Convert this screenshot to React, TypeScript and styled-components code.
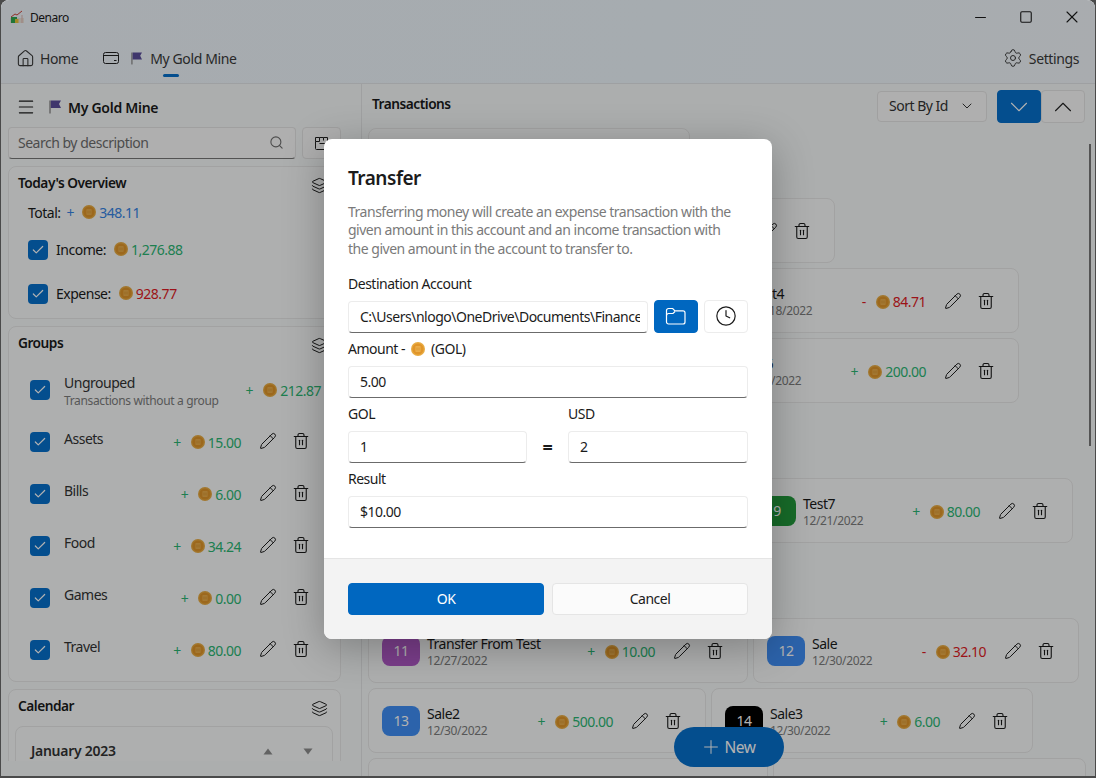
import React from 'react';
import styled, { createGlobalStyle } from 'styled-components';
import {
	Check,
	ChevronDown,
	ChevronUp,
	Clock,
	House,
	Layers,
	Menu,
	Minus,
	Pencil,
	Plus,
	Search,
	Settings,
	Square,
	Trash2,
	X,
} from 'lucide-react';

const GlobalStyle = createGlobalStyle`
	html, body {
		margin: 0;
		padding: 0;
		height: 100%;
		background: #4a4a4a;
		overflow: hidden;
	}
	* {
		box-sizing: border-box;
	}
	body {
		font-family: "Noto Sans", "Open Sans", sans-serif;
		font-size: 14px;
		letter-spacing: -0.035em;
		color: #1b1b1b;
	}
`;

const AppWindow = styled.div`
	position: relative;
	width: 1094px;
	height: 776px;
	margin-left: 1px;
	border-radius: 8px 8px 0 0;
	overflow: hidden;
	display: flex;
	flex-flow: column;
	background: #f7fafa;
`;

const TopArea = styled.div`
	flex: 0 0 84px;
	background: linear-gradient(100deg, #eff5fb, #eef6fc 60%, #f2f7fb);
	border-bottom: 1px solid #e2e6e9;
	display: flex;
	flex-flow: column;
`;

const TitleBar = styled.div`
	flex: 0 0 33px;
	display: flex;
	align-items: center;
	padding-left: 9px;
	gap: 6px;
	font-size: 12px;
	padding-top: 1px;
`;

const WindowButtons = styled.div`
	margin-left: auto;
	display: flex;
`;

const WindowButton = styled.div`
	width: 46px;
	height: 20px;
	display: flex;
	align-items: center;
	justify-content: center;
`;

const TabBar = styled.div`
	flex: 1;
	display: flex;
	align-items: center;
	padding: 0 16px 0 15px;
	color: #3a3a3a;
`;

const Tab = styled.div`
	position: relative;
	height: 100%;
	display: flex;
	align-items: center;
	gap: 8px;
	letter-spacing: -0.028em;
`;

const TabIndicator = styled.div`
	position: absolute;
	left: 60px;
	bottom: 6px;
	width: 16px;
	height: 3px;
	border-radius: 2px;
	background: #0670cc;
`;

const HomeTab = styled(Tab)`
	margin-right: 25px;
	gap: 5px;
`;

const SettingsTab = styled(Tab)`
	margin-left: auto;
	gap: 6px;
`;

const TabCardIcon = styled.span`
	display: flex;
	margin-right: 4px;
`;

const Body = styled.div`
	flex: 1;
	min-height: 0;
	display: flex;
`;

const LeftPane = styled.div`
	flex: 0 0 360px;
	height: 677px;
	overflow: hidden;
	padding: 5px 20px 0 7px;
	display: flex;
	flex-flow: column;
`;

const PaneHeader = styled.div`
	height: 36px;
	flex: none;
	display: flex;
	align-items: center;
	padding-left: 8px;
	gap: 13px;
	margin-bottom: 2px;
	font-weight: 600;
	letter-spacing: -0.02em;
`;

const PaneTitle = styled.div`
	display: flex;
	align-items: center;
	gap: 7px;
`;

const SearchRow = styled.div`
	flex: none;
	display: flex;
	gap: 6px;
	margin-bottom: 7px;
`;

const SearchBox = styled.div`
	flex: 1;
	height: 32px;
	display: flex;
	align-items: center;
	justify-content: space-between;
	padding: 0 11px 2px 9px;
	background: #fbfbfb;
	border: 1px solid #e5e5e5;
	border-bottom-color: #777;
	border-radius: 4px;
	color: #6e6e6e;
`;

const SquareButton = styled.div`
	flex: 0 0 39px;
	height: 32px;
	display: flex;
	align-items: center;
	padding-left: 11px;
	background: #fbfbfb;
	border: 1px solid #e5e5e5;
	border-radius: 4px;
`;

const Card = styled.div`
	flex: none;
	background: rgba(255, 255, 255, 0.3);
	border: 1px solid #e8e8e8;
	border-radius: 8px;
	padding: 5px 13px 0 9px;
	margin-bottom: 7px;
`;

const CardHeader = styled.div`
	height: 20px;
	display: flex;
	align-items: center;
	justify-content: space-between;
	font-weight: 600;
	font-size: 13.7px;
`;

const LayersIcon = styled(Layers)`
	margin-top: 6px;
	margin-right: -1px;
`;

const OverviewBody = styled.div`
	padding: 11px 0 14px 10px;
	display: flex;
	flex-flow: column;
	gap: 17px;
`;

const OverviewRow = styled.div`
	height: 20px;
	display: flex;
	align-items: center;
	gap: 8px;
	padding-bottom: 2px;
`;

const TotalRow = styled(OverviewRow)`
	gap: 6px;
`;

const ExpenseRow = styled(OverviewRow)`
	margin-top: 7px;
`;

const CheckBox = styled.div`
	flex: 0 0 20px;
	height: 20px;
	margin-bottom: -2px;
	border-radius: 4px;
	background: #0670cc;
	display: flex;
	align-items: center;
	justify-content: center;
	color: #fff;
`;

const Money = styled.span<{ $tone: string }>`
	display: inline-flex;
	align-items: center;
	gap: 3px;
	color: ${(p) => p.$tone};
`;

const Sign = styled.span<{ $tone: string }>`
	color: ${(p) => p.$tone};
	margin-right: 10px;
`;

const TotalSign = styled(Sign)`
	margin-right: 2px;
`;

const GroupList = styled.div`
	margin-top: 11px;
	padding-bottom: 6px;
`;

const GroupRow = styled.div<{ $wide?: boolean }>`
	height: 52px;
	display: flex;
	align-items: center;
	padding-left: 12px;
	padding-right: ${(p) => (p.$wide ? '6px' : '17px')};
`;

const GroupText = styled.div<{ $single?: boolean }>`
	margin-left: 14px;
	margin-top: ${(p) => (p.$single ? '-4px' : '4px')};
	display: flex;
	flex-flow: column;
	color: #333;
	line-height: 20px;
`;

const SubText = styled.div`
	font-size: 12px;
	letter-spacing: -0.03em;
	color: #7d7d7d;
	line-height: 16px;
	white-space: nowrap;
`;

const Amount = styled.div`
	margin-left: auto;
	margin-top: 2px;
	display: flex;
	align-items: center;
	white-space: nowrap;
`;

const Actions = styled.div`
	display: flex;
	align-items: center;
	gap: 15px;
	margin-left: 18px;
`;

const Month = styled.div`
	margin: 11px -6px 0 -3px;
	height: 60px;
	border: 1px solid #e8e8e8;
	border-radius: 8px;
	padding: 14px 19px 0 15px;
	display: flex;
	align-items: flex-start;
	justify-content: space-between;
	font-weight: 600;
	color: #333;
	letter-spacing: -0.02em;
`;

const MonthArrows = styled.div`
	display: flex;
	gap: 30px;
	height: 20px;
	align-items: center;
	color: #8d8d8d;
`;

const RightPane = styled.div`
	flex: 1;
	min-width: 0;
	position: relative;
	border-left: 1px solid #e4e6e7;
	padding: 6px 0 0 0;
	display: flex;
	flex-flow: column;
`;

const RightHeader = styled.div`
	flex: none;
	height: 33px;
	display: flex;
	align-items: center;
	padding: 0 10px 0 10px;
	margin-bottom: 5px;
`;

const RightTitle = styled.div`
	font-weight: 600;
	font-size: 13.7px;
	margin-right: auto;
	margin-top: -6px;
`;

const SortBox = styled.div`
	width: 110px;
	height: 31px;
	display: flex;
	align-items: center;
	justify-content: space-between;
	padding: 0 11px 2px 11px;
	background: #fbfbfb;
	border: 1px solid #e5e5e5;
	border-radius: 4px;
	margin-right: 10px;
	color: #333;
`;

const ArrowButton = styled.div<{ $active?: boolean }>`
	width: 44px;
	height: 33px;
	display: flex;
	align-items: center;
	justify-content: center;
	border-radius: 4px;
	background: ${(p) => (p.$active ? '#0670cc' : '#fbfbfb')};
	color: ${(p) => (p.$active ? '#fff' : '#222')};
	border: 1px solid ${(p) => (p.$active ? '#0670cc' : '#e5e5e5')};
`;

const TransactionList = styled.div`
	flex: 1;
	min-height: 0;
	overflow: hidden;
	padding-left: 6px;
	display: flex;
	flex-flow: column;
	gap: 5px;
`;

const TransactionRow = styled.div`
	flex: none;
	display: flex;
	gap: 5px;
`;

const TransactionCard = styled.div<{ $width: number }>`
	flex: 0 0 ${(p) => p.$width}px;
	height: 65px;
	display: flex;
	align-items: center;
	padding: 0 23px 0 13px;
	background: rgba(255, 255, 255, 0.3);
	border: 1px solid #e8e8e8;
	border-radius: 8px;
`;

const Avatar = styled.div<{ $color: string }>`
	flex: 0 0 38px;
	height: 30px;
	border-radius: 8px;
	background: ${(p) => p.$color};
	color: #fff;
	display: flex;
	align-items: center;
	justify-content: center;
`;

const TransactionText = styled.div`
	margin: 2px 0 0 7px;
	display: flex;
	flex-flow: column;
	line-height: 18px;
	white-space: nowrap;
`;

const Scrollbar = styled.div`
	position: absolute;
	right: 4px;
	top: 60px;
	width: 2px;
	height: 302px;
	background: #777;
`;

const NewButton = styled.div`
	position: absolute;
	left: 673px;
	top: 727px;
	width: 110px;
	height: 40px;
	padding: 0 3px 1px 0;
	border-radius: 20px;
	background: #0670cc;
	color: #fff;
	display: flex;
	align-items: center;
	justify-content: center;
	gap: 3px;
	font-size: 15.5px;
`;

const Overlay = styled.div`
	position: absolute;
	inset: 0;
	background: rgba(0, 0, 0, 0.3);
	display: flex;
	align-items: center;
	justify-content: center;
	padding-top: 1px;
`;

const Dialog = styled.div`
	width: 448px;
	height: 500px;
	background: #fff;
	border-radius: 8px;
	box-shadow: 0 8px 40px rgba(0, 0, 0, 0.28);
	display: flex;
	flex-flow: column;
	overflow: hidden;
`;

const DialogBody = styled.div`
	flex: 1;
	padding: 24px 24px 0;
`;

const DialogTitle = styled.div`
	font-size: 19px;
	font-weight: 600;
	line-height: 30px;
	margin-bottom: 10px;
`;

const DialogText = styled.div`
	color: #7a7a7a;
	line-height: 18.5px;
	margin-bottom: 15.5px;
	padding-right: 10px;
`;

const FieldLabel = styled.div`
	display: flex;
	align-items: center;
	gap: 6px;
	height: 20px;
`;

const ResultLabel = styled(FieldLabel)`
	margin-top: 6px;
`;

const FieldRow = styled.div`
	display: flex;
	gap: 6px;
	margin: 7px 0 6px;
`;

const TextInput = styled.input`
	flex: 1;
	width: 100%;
	min-width: 0;
	height: 32px;
	font: inherit;
	letter-spacing: inherit;
	color: #1b1b1b;
	padding: 0 7px 0 11px;
	background: #fff;
	border: 1px solid #ececec;
	border-bottom-color: #6b6b6b;
	border-radius: 4px;
	outline: none;
`;

const RateInput = styled(TextInput)`
	flex: none;
`;

const IconButton = styled.div<{ $primary?: boolean }>`
	flex: 0 0 44px;
	height: 33px;
	margin-top: -1px;
	display: flex;
	align-items: center;
	justify-content: center;
	border-radius: 4px;
	background: ${(p) => (p.$primary ? '#0067c0' : '#fff')};
	color: ${(p) => (p.$primary ? '#fff' : '#1b1b1b')};
	border: 1px solid ${(p) => (p.$primary ? '#0067c0' : '#ececec')};
`;

const RateGrid = styled.div`
	display: grid;
	grid-template-columns: 179px 41px 180px;
`;

const RateCell = styled.div`
	display: flex;
	flex-flow: column;
	gap: 7px;
`;

const EqualSign = styled.div`
	align-self: end;
	height: 32px;
	display: flex;
	align-items: center;
	justify-content: center;
	font-weight: 700;
	font-size: 18px;
`;

const DialogFooter = styled.div`
	flex: 0 0 81px;
	background: #f3f3f3;
	border-top: 1px solid #e5e5e5;
	padding: 24px 24px 0;
	display: flex;
	gap: 8px;
`;

const FooterButton = styled.div<{ $primary?: boolean }>`
	flex: 1;
	height: 32px;
	display: flex;
	align-items: center;
	justify-content: center;
	border-radius: 4px;
	background: ${(p) => (p.$primary ? '#0067c0' : '#fbfbfb')};
	color: ${(p) => (p.$primary ? '#fff' : '#1b1b1b')};
	border: 1px solid ${(p) => (p.$primary ? '#0067c0' : '#e5e5e5')};
`;

const GREEN = '#2bb673';
const RED = '#e01b24';
const BLUE = '#3584e4';

function Coin() {
	return (
		<svg width="14" height="14" viewBox="0 0 14 14">
			<circle cx="7" cy="7" r="7" fill="#e8ab42" />
			<circle cx="7" cy="7" r="5.6" fill="#e0952a" />
			<path d="M4.500 4.200h5v5.600h-5z" fill="#eeb352" />
			<path d="M6 5.400v3.200M8 5.400v3.200" stroke="#d18a22" strokeWidth="0.8" />
		</svg>
	);
}

function FlagIcon({ size }: { size: number }) {
	return (
		<svg width={size} height={size + 2} viewBox="0 0 12 14">
			<rect x="0.2" y="0.5" width="1.6" height="13" fill="#9a9a9a" />
			<path d="M1.800 0.500H12L10 4L12 8H1.800z" fill="#5b4e9b" />
		</svg>
	);
}

function CardIcon() {
	return (
		<svg width="16" height="12" viewBox="0 0 16 12" fill="none" stroke="#222" strokeWidth="1">
			<rect x="0.500" y="0.500" width="15" height="11" rx="2" />
			<path d="M0.500 3.500h15M11 8.500h2.500" />
		</svg>
	);
}

function AppLogo() {
	return (
		<svg width="14" height="14" viewBox="0 0 14 14">
			<rect x="0" y="8" width="14" height="5" fill="#e9e2da" />
			<rect x="1" y="7" width="6" height="6" fill="#2fa84f" />
			<rect x="5" y="9" width="3.500" height="4" fill="#e8c33a" />
			<path d="M1 7L5 4L7 5L12 1" stroke="#d2463c" strokeWidth="1" fill="none" />
			<path d="M12 5V13" stroke="#e3b6ae" strokeWidth="1" />
		</svg>
	);
}

function ViewIcon() {
	return (
		<svg width="16" height="15" viewBox="0 0 16 15" fill="none" stroke="#222" strokeWidth="1">
			<path d="M1.500 1.500h4v4h-4zM5.500 1.500h4v3M1.500 5.500v7a1 1 0 0 0 1 1h9a2 2 0 0 0 2-2V7.500h-8" />
			<path d="M9.500 1.500h4v4" />
		</svg>
	);
}

function FolderOutline() {
	return (
		<svg width="22" height="18" viewBox="0 0 22 18" fill="none" stroke="currentColor" strokeWidth="1.2">
			<path d="M1.500 15V3.500a2 2 0 0 1 2-2h4.200l2.300 2.300h8a2 2 0 0 1 2 2V15a2 2 0 0 1-2 2h-14.500a2 2 0 0 1-2-2z" />
			<path d="M1.500 8.500a2 2 0 0 1 2-2h4.500l2-2" />
		</svg>
	);
}

function Triangle({ down }: { down?: boolean }) {
	return (
		<svg width="10" height="7" viewBox="0 0 10 7" fill="currentColor">
			<path d={down ? 'M0.500 0.500h9L5 6.500z' : 'M5 0.500L9.500 6.500h-9z'} />
		</svg>
	);
}

function Tick() {
	return <Check size={14} strokeWidth={1.2} absoluteStrokeWidth />;
}

function RowActions() {
	return (
		<Actions>
			<Pencil size={18} strokeWidth={1} absoluteStrokeWidth />
			<Trash2 size={18} strokeWidth={1.1} absoluteStrokeWidth />
		</Actions>
	);
}

function MoneyAmount({ sign, value }: { sign: string; value: string }) {
	const tone = sign === '-' ? RED : GREEN;
	return (
		<Amount>
			<Sign $tone={tone}>{sign}</Sign>
			<Money $tone={tone}>
				<Coin />
				{value}
			</Money>
		</Amount>
	);
}

const groups = [
	{ name: 'Assets', value: '15.00' },
	{ name: 'Bills', value: '6.00' },
	{ name: 'Food', value: '34.24' },
	{ name: 'Games', value: '0.00' },
	{ name: 'Travel', value: '80.00' },
];

const BLUE_TAG = '#3f8ff5';
const GREEN_TAG = '#219a3c';
const PURPLE_TAG = '#b05ac8';

type Tx = {
	id: number;
	width: number;
	color: string;
	name: string;
	date: string;
	sign: string;
	value: string;
};

const rows: Tx[][] = [
	[{ id: 1, width: 322, color: BLUE_TAG, name: 'Test', date: '12/1/2022', sign: '+', value: '100.00' }],
	[{ id: 2, width: 467, color: BLUE_TAG, name: 'Test2', date: '12/5/2022', sign: '+', value: '50.00' }],
	[
		{ id: 3, width: 320, color: BLUE_TAG, name: 'Test3', date: '12/9/2022', sign: '-', value: '20.00' },
		{ id: 4, width: 326, color: BLUE_TAG, name: 'Test4', date: '12/18/2022', sign: '-', value: '84.71' },
	],
	[
		{ id: 5, width: 309, color: BLUE_TAG, name: 'Test5', date: '12/19/2022', sign: '-', value: '12.00' },
		{ id: 6, width: 337, color: BLUE_TAG, name: 'Test6', date: '12/20/2022', sign: '+', value: '200.00' },
	],
	[{ id: 7, width: 390, color: BLUE_TAG, name: 'Test8', date: '12/20/2022', sign: '+', value: '30.00' }],
	[
		{ id: 8, width: 371, color: BLUE_TAG, name: 'Test9', date: '12/21/2022', sign: '+', value: '5.00' },
		{ id: 9, width: 329, color: GREEN_TAG, name: 'Test7', date: '12/21/2022', sign: '+', value: '80.00' },
	],
	[{ id: 10, width: 370, color: BLUE_TAG, name: 'Transfer To Test', date: '12/27/2022', sign: '-', value: '5.00' }],
	[
		{ id: 11, width: 380, color: PURPLE_TAG, name: 'Transfer From Test', date: '12/27/2022', sign: '+', value: '10.00' },
		{ id: 12, width: 326, color: BLUE_TAG, name: 'Sale', date: '12/30/2022', sign: '-', value: '32.10' },
	],
	[
		{ id: 13, width: 338, color: BLUE_TAG, name: 'Sale2', date: '12/30/2022', sign: '+', value: '500.00' },
		{ id: 14, width: 322, color: '#000', name: 'Sale3', date: '12/30/2022', sign: '+', value: '6.00' },
	],
	[
		{ id: 15, width: 400, color: '#0670cc', name: 'Sale4', date: '12/30/2022', sign: '+', value: '1.00' },
		{ id: 16, width: 313, color: '#0670cc', name: 'Sale5', date: '12/30/2022', sign: '+', value: '1.00' },
	],
];

function App() {
	return (
		<AppWindow>
			<GlobalStyle />
			<TopArea>
				<TitleBar>
					<AppLogo />
					Denaro
					<WindowButtons>
						<WindowButton>
							<Minus size={17} strokeWidth={1.1} absoluteStrokeWidth />
						</WindowButton>
						<WindowButton>
							<Square size={14} strokeWidth={1.1} absoluteStrokeWidth />
						</WindowButton>
						<WindowButton>
							<X size={20} strokeWidth={1.1} absoluteStrokeWidth />
						</WindowButton>
					</WindowButtons>
				</TitleBar>
				<TabBar>
					<HomeTab>
						<House size={19} strokeWidth={1.1} absoluteStrokeWidth />
						Home
					</HomeTab>
					<Tab>
						<TabCardIcon>
							<CardIcon />
						</TabCardIcon>
						<FlagIcon size={11} />
						My Gold Mine
						<TabIndicator />
					</Tab>
					<SettingsTab>
						<Settings size={20} strokeWidth={1} absoluteStrokeWidth />
						Settings
					</SettingsTab>
				</TabBar>
			</TopArea>

			<Body>
				<LeftPane>
					<PaneHeader>
						<Menu size={20} strokeWidth={1.1} absoluteStrokeWidth />
						<PaneTitle>
							<FlagIcon size={12} />
							My Gold Mine
						</PaneTitle>
					</PaneHeader>
					<SearchRow>
						<SearchBox>
							Search by description
							<Search size={15} strokeWidth={1.1} absoluteStrokeWidth />
						</SearchBox>
						<SquareButton>
							<ViewIcon />
						</SquareButton>
					</SearchRow>

					<Card>
						<CardHeader>
							Today's Overview
							<LayersIcon size={17} strokeWidth={1} absoluteStrokeWidth />
						</CardHeader>
						<OverviewBody>
							<TotalRow>
								Total:
								<TotalSign $tone={BLUE}>+</TotalSign>
								<Money $tone={BLUE}>
									<Coin />
									348.11
								</Money>
							</TotalRow>
							<OverviewRow>
								<CheckBox>
									<Tick />
								</CheckBox>
								Income:
								<Money $tone={GREEN}>
									<Coin />
									1,276.88
								</Money>
							</OverviewRow>
							<ExpenseRow>
								<CheckBox>
									<Tick />
								</CheckBox>
								Expense:
								<Money $tone={RED}>
									<Coin />
									928.77
								</Money>
							</ExpenseRow>
						</OverviewBody>
					</Card>

					<Card>
						<CardHeader>
							Groups
							<LayersIcon size={17} strokeWidth={1} absoluteStrokeWidth />
						</CardHeader>
						<GroupList>
							<GroupRow $wide>
								<CheckBox>
									<Tick />
								</CheckBox>
								<GroupText>
									Ungrouped
									<SubText>Transactions without a group</SubText>
								</GroupText>
								<MoneyAmount sign="+" value="212.87" />
							</GroupRow>
							{groups.map((g) => (
								<GroupRow key={g.name}>
									<CheckBox>
										<Tick />
									</CheckBox>
									<GroupText $single>{g.name}</GroupText>
									<MoneyAmount sign="+" value={g.value} />
									<RowActions />
								</GroupRow>
							))}
						</GroupList>
					</Card>

					<Card>
						<CardHeader>
							Calendar
							<LayersIcon size={17} strokeWidth={1} absoluteStrokeWidth />
						</CardHeader>
						<Month>
							January 2023
							<MonthArrows>
								<Triangle />
								<Triangle down />
							</MonthArrows>
						</Month>
					</Card>
				</LeftPane>

				<RightPane>
					<RightHeader>
						<RightTitle>Transactions</RightTitle>
						<SortBox>
							Sort By Id
							<ChevronDown size={16} strokeWidth={1} absoluteStrokeWidth />
						</SortBox>
						<ArrowButton $active>
							<ChevronDown size={30} strokeWidth={1.1} absoluteStrokeWidth />
						</ArrowButton>
						<ArrowButton>
							<ChevronUp size={30} strokeWidth={1.1} absoluteStrokeWidth />
						</ArrowButton>
					</RightHeader>
					<TransactionList>
						{rows.map((row) => (
							<TransactionRow key={row[0].id}>
								{row.map((tx) => (
									<TransactionCard key={tx.id} $width={tx.width}>
										<Avatar $color={tx.color}>{tx.id}</Avatar>
										<TransactionText>
											{tx.name}
											<SubText>{tx.date}</SubText>
										</TransactionText>
										<MoneyAmount sign={tx.sign} value={tx.value} />
										<RowActions />
									</TransactionCard>
								))}
							</TransactionRow>
						))}
					</TransactionList>
					<Scrollbar />
				</RightPane>
			</Body>

			<NewButton>
				<Plus size={22} strokeWidth={1} absoluteStrokeWidth />
				New
			</NewButton>

			<Overlay>
				<Dialog>
					<DialogBody>
						<DialogTitle>Transfer</DialogTitle>
						<DialogText>
							Transferring money will create an expense transaction with the given amount in this account and an
							income transaction with the given amount in the account to transfer to.
						</DialogText>
						<FieldLabel>Destination Account</FieldLabel>
						<FieldRow>
							<TextInput readOnly value="C:\Users\nlogo\OneDrive\Documents\Finances\Test.nmoney" />
							<IconButton $primary>
								<FolderOutline />
							</IconButton>
							<IconButton>
								<Clock size={22} strokeWidth={1.2} absoluteStrokeWidth />
							</IconButton>
						</FieldRow>
						<FieldLabel>
							Amount - <Coin /> (GOL)
						</FieldLabel>
						<FieldRow>
							<TextInput readOnly value="5.00" />
						</FieldRow>
						<RateGrid>
							<RateCell>
								<FieldLabel>GOL</FieldLabel>
								<RateInput readOnly value="1" />
							</RateCell>
							<EqualSign>=</EqualSign>
							<RateCell>
								<FieldLabel>USD</FieldLabel>
								<RateInput readOnly value="2" />
							</RateCell>
						</RateGrid>
						<ResultLabel>Result</ResultLabel>
						<FieldRow>
							<TextInput readOnly value="$10.00" />
						</FieldRow>
					</DialogBody>
					<DialogFooter>
						<FooterButton $primary>OK</FooterButton>
						<FooterButton>Cancel</FooterButton>
					</DialogFooter>
				</Dialog>
			</Overlay>
		</AppWindow>
	);
}

export default App;
